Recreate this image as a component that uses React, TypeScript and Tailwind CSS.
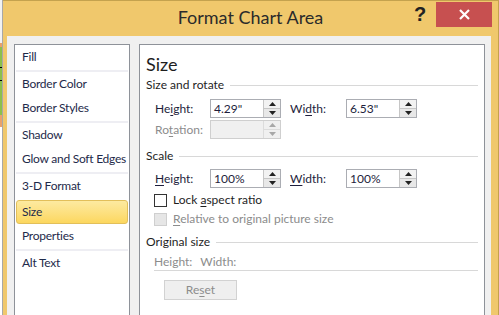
import React from "react";

const font = { fontFamily: "Lato, 'Liberation Sans', sans-serif" };

function Arrow({ up, disabled }: { up?: boolean; disabled?: boolean }) {
    return (
        <svg width="7" height="4" viewBox="0 0 7 4">
            <path d={up ? "M0 4 L3.5 0 L7 4 Z" : "M0 0 L3.5 4 L7 0 Z"} fill={disabled ? "#a8a8a8" : "#222"} />
        </svg>
    );
}

function SpinBox({ value, disabled }: { value?: string; disabled?: boolean }) {
    return (
        <div className={`flex h-[19px] w-[71px] border ${disabled ? "border-[#cfcfcf] bg-[#f0f0f0]" : "border-[#abadb3] bg-white"}`}>
            <div className="flex-1 pl-[3px] leading-[17px] text-[#1e1e3c]">{value}</div>
            <div className={`flex w-[17px] flex-col border-l ${disabled ? "border-[#dcdcdc]" : "border-[#c6c6c6]"}`}>
                <div className={`flex flex-1 items-center justify-center border-b ${disabled ? "border-[#dcdcdc] bg-[#f0f0f0]" : "border-[#c6c6c6] bg-[#f2f2f2]"}`}>
                    <Arrow up disabled={disabled} />
                </div>
                <div className={`flex flex-1 items-center justify-center ${disabled ? "bg-[#f0f0f0]" : "bg-[#e8e8e8]"}`}>
                    <Arrow disabled={disabled} />
                </div>
            </div>
        </div>
    );
}

function SectionHead({ children }: { children: React.ReactNode }) {
    return (
        <div className="flex h-[16px] items-center text-[#1e1e1e]">
            <span>{children}</span>
            <div className="ml-[6px] h-px flex-1 bg-[#d8d8d8]" />
        </div>
    );
}

function NavItem({ label }: { label: string }) {
    return <div className="h-[24px] whitespace-nowrap pl-[7px] leading-[24px] tracking-[-0.25px] text-[#1e2a4a]">{label}</div>;
}

function Sep() {
    return (
        <div className="h-[3px] pt-[1px]">
            <div className="mx-px h-[2px] bg-[#eeeef3]" />
        </div>
    );
}

export default function App() {
    return (
        <div className="flex h-[315px] w-[499px] overflow-hidden bg-white text-[12px]" style={font}>
            {/* excel sheet peeking out on the left */}
            <div className="flex w-[3px] flex-col border-r border-[#a8a8a8]">
                <div className="h-[43px] bg-[#f2f2f2]" />
                <div className="h-[4px] bg-[#e9a26a]" />
                <div className="flex h-[68px] flex-col bg-[#8cc04a]">
                    <div className="mt-[20px] h-px bg-black" />
                    <div className="mt-[12px] h-px bg-black" />
                </div>
                <div className="h-[12px] bg-[#e9a26a]" />
                <div className="flex-1 bg-white" />
            </div>

            <div className="relative flex flex-1 flex-col border-r border-t border-[#c4a24e] bg-[#f0c86c]">
                {/* title bar */}
                <div className="flex h-[35px] items-center justify-center pb-[2px] text-[18px] text-[#2b2b2b]">
                    Format Chart Area
                </div>
                <div className="absolute left-[411px] top-[1px] text-[20px] font-bold leading-[24px] text-[#222]" style={{ fontFamily: "'Liberation Sans', sans-serif" }}>?</div>
                <div className="absolute left-[433px] top-[1px] flex h-[25px] w-[56px] items-center justify-center bg-[#c75050]">
                    <svg width="11" height="11" viewBox="0 0 11 11">
                        <path d="M1 1 L10 10 M10 1 L1 10" stroke="white" strokeWidth="2.2" />
                    </svg>
                </div>

                {/* client area */}
                <div className="ml-[4px] mr-[7px] flex flex-1 gap-[9px] bg-[#f0f0f0] pl-[7px] pr-[6px] pt-[8px]">
                    {/* category list */}
                    <div className="w-[116px] border border-b-0 border-[#8e9299] bg-white">
                        <NavItem label="Fill" />
                        <Sep />
                        <NavItem label="Border Color" />
                        <NavItem label="Border Styles" />
                        <Sep />
                        <NavItem label="Shadow" />
                        <NavItem label="Glow and Soft Edges" />
                        <Sep />
                        <NavItem label="3-D Format" />
                        <div className="h-[26px] px-px pt-[2px]">
                            <div className="h-[24px] rounded-[3px] border border-[#e2bf5a] bg-gradient-to-b from-[#fdeaa0] to-[#fcd75e] pl-[5px] leading-[22px] tracking-[-0.25px] text-[#1e2a4a]">
                                Size
                            </div>
                        </div>
                        <NavItem label="Properties" />
                        <Sep />
                        <NavItem label="Alt Text" />
                    </div>

                    {/* settings panel */}
                    <div className="flex flex-1 flex-col border border-b-0 border-[#8e9299] bg-white pl-[6px] pr-[6px]">
                        <div className="mt-[7px] h-[24px] text-[18px] leading-[24px] text-[#1e1e1e]">Size</div>

                        <div className="mt-[1px]"><SectionHead>Size and rotate</SectionHead></div>

                        <div className="ml-[9px] mt-[6px] flex items-center text-[#1e1e3c]">
                            <span className="w-[55px]">He<u className="underline-offset-2">i</u>ght:</span>
                            <SpinBox value={'4.29"'} />
                            <span className="ml-[9px] w-[56px]">Wi<u className="underline-offset-2">d</u>th:</span>
                            <SpinBox value={'6.53"'} />
                        </div>
                        <div className="ml-[9px] mt-[2px] flex items-center text-[#8c8c8c]">
                            <span className="w-[55px]">Ro<u className="underline-offset-2">t</u>ation:</span>
                            <SpinBox disabled />
                        </div>

                        <div className="mt-[9px]"><SectionHead>Scale</SectionHead></div>

                        <div className="ml-[9px] mt-[5px] flex items-center text-[#1e1e3c]">
                            <span className="w-[55px]"><u className="underline-offset-2">H</u>eight:</span>
                            <SpinBox value="100%" />
                            <span className="ml-[9px] w-[56px]"><u className="underline-offset-2">W</u>idth:</span>
                            <SpinBox value="100%" />
                        </div>

                        <div className="ml-[8px] mt-[4px] flex h-[16px] items-center gap-[6px] text-[#1e1e1e]">
                            <div className="h-[13px] w-[13px] border border-[#333] bg-white" />
                            <span>Lock <u className="underline-offset-2">a</u>spect ratio</span>
                        </div>
                        <div className="ml-[8px] mt-[3px] flex h-[16px] items-center gap-[6px] text-[#8c8c8c]">
                            <div className="h-[13px] w-[13px] border border-[#cfcfcf] bg-[#e6e6e6]" />
                            <span><u className="underline-offset-2">R</u>elative to original picture size</span>
                        </div>

                        <div className="mt-[7px]"><SectionHead>Original size</SectionHead></div>

                        <div className="ml-[8px] mt-[4px] flex h-[17px] items-center gap-[8px] border-b border-[#d8d8d8] pb-px text-[#8c8c8c]">
                            <span>Height:</span>
                            <span>Width:</span>
                        </div>

                        <div className="ml-[18px] mt-[9px] flex h-[20px] w-[73px] items-center justify-center border border-[#d2d2d2] bg-[#efefef] text-[#8c8c8c]">
                            Re<u className="underline-offset-2">s</u>et
                        </div>
                    </div>
                </div>
            </div>
        </div>
    );
}
